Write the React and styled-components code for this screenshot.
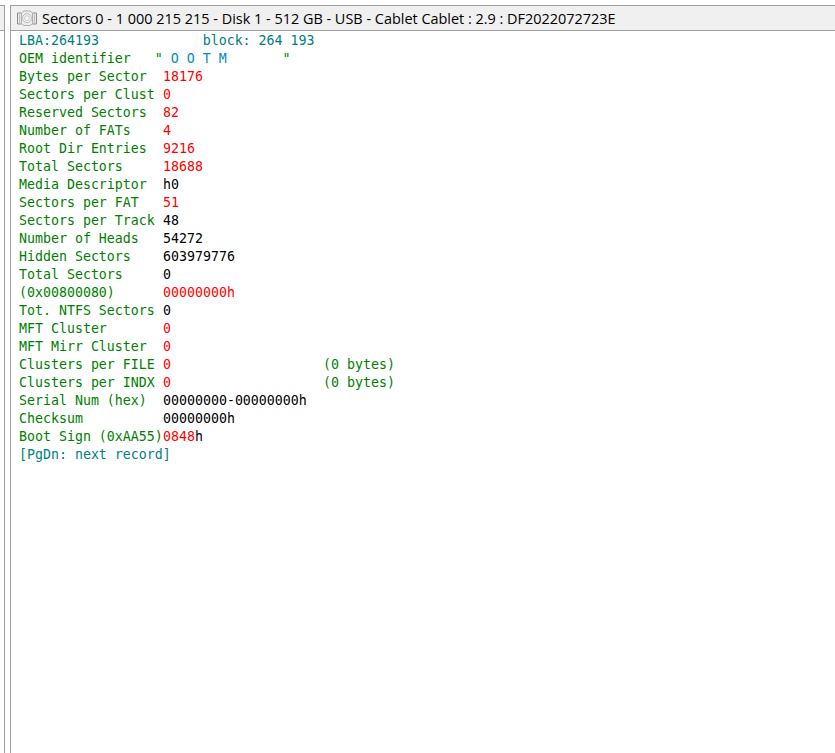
import React from "react";
import styled, { createGlobalStyle } from "styled-components";

const Global = createGlobalStyle`
  html, body { margin: 0; padding: 0; background: #fff; }
  body { width: 835px; height: 753px; overflow: hidden; }
`;

const Desk = styled.div`
  display: flex;
  height: 753px;
  padding-top: 5px;
  box-sizing: border-box;
`;

const SidePane = styled.div`
  flex: none;
  width: 5px;
  box-sizing: border-box;
  border-right: 1px solid #a0a0a0;
`;

const SideHeader = styled.div`
  height: 26px;
  box-sizing: border-box;
  background: #f0f0f0;
  border-top: 1px solid #a0a0a0;
  border-bottom: 1px solid #a0a0a0;
`;

const Window = styled.div`
  flex: 1;
  margin-left: 5px;
  border-left: 1px solid #a0a0a0;
  display: flex;
  flex-direction: column;
  min-width: 0;
`;

const TitleBar = styled.div`
  flex: none;
  height: 26px;
  box-sizing: border-box;
  display: flex;
  align-items: center;
  gap: 4px;
  padding-left: 5px;
  background: #f0f0f0;
  border-top: 1px solid #a0a0a0;
  border-bottom: 1px solid #a0a0a0;
`;

const TitleText = styled.span`
  font-family: "Open Sans", "Liberation Sans", sans-serif;
  font-size: 14.45px;
  color: #000;
  white-space: pre;
`;

const Dump = styled.div`
  padding: 1px 0 0 8px;
  font-family: "DejaVu Sans Mono", "Liberation Mono", monospace;
  font-size: 13.28px;
  line-height: 18px;
`;

const Row = styled.div`
  display: flex;
  height: 18px;
  white-space: pre;
`;

const Label = styled.span`
  flex: none;
  width: 144px;
  color: #008000;
`;

const Value = styled.span`
  flex: none;
  width: ${(p) => (p.$wide ? "160px" : "auto")};
  color: ${(p) => (p.$tone === "red" ? "#ff0000" : "#000")};
`;

const Note = styled.span`
  color: #008000;
`;

const Teal = styled.span`
  color: ${(p) => p.$color || "#008080"};
`;

const Green = styled.span`
  color: #008000;
`;

const Red = styled.span`
  color: #ff0000;
`;

function DiskIcon() {
  return (
    <svg width="22" height="16" viewBox="0 0 22 16" fill="none">
      <path d="M5.5 3H1.5V14H5.5M16.5 3H20.5V14H16.5" stroke="#8f8f8f" fill="#e6e6e6" />
      <path d="M3.5 4.5V12.5M18.5 4.5V12.5" stroke="#bdbdbd" />
      <path d="M5.5 3L8 1H14L16.5 3V14L14 15.5H8L5.5 14Z" stroke="#b0b0b0" fill="#ededed" />
      <circle cx="11" cy="8.2" r="4.5" stroke="#bcbcbc" fill="#f3f3f3" />
      <circle cx="11" cy="8.2" r="2.5" stroke="#cdcdcd" />
    </svg>
  );
}

const rows = [
  ["Bytes per Sector", "18176", "red"],
  ["Sectors per Clust", "0", "red"],
  ["Reserved Sectors", "82", "red"],
  ["Number of FATs", "4", "red"],
  ["Root Dir Entries", "9216", "red"],
  ["Total Sectors", "18688", "red"],
  ["Media Descriptor", "h0"],
  ["Sectors per FAT", "51", "red"],
  ["Sectors per Track", "48"],
  ["Number of Heads", "54272"],
  ["Hidden Sectors", "603979776"],
  ["Total Sectors", "0"],
  ["(0x00800080)", "00000000h", "red"],
  ["Tot. NTFS Sectors", "0"],
  ["MFT Cluster", "0", "red"],
  ["MFT Mirr Cluster", "0", "red"],
  ["Clusters per FILE", "0", "red", "(0 bytes)"],
  ["Clusters per INDX", "0", "red", "(0 bytes)"],
  ["Serial Num (hex)", "00000000-00000000h"],
  ["Checksum", "00000000h"],
];

export default function App() {
  return (
    <>
      <Global />
      <Desk>
        <SidePane>
          <SideHeader />
        </SidePane>
        <Window>
          <TitleBar>
            <DiskIcon />
            <TitleText>Sectors 0 - 1 000 215 215 - Disk 1 - 512 GB - USB - Cablet Cablet : 2.9 : DF2022072723E</TitleText>
          </TitleBar>
          <Dump>
            <Row>
              <Teal>{"LBA:264193             block: 264 193"}</Teal>
            </Row>
            <Row>
              <Green>{'OEM identifier   " '}</Green>
              <Teal $color="#0090b0">{"O O T M"}</Teal>
              <Green>{'       "'}</Green>
            </Row>
            {rows.map(([label, value, tone, note], i) => (
              <Row key={i}>
                <Label>{label}</Label>
                <Value $tone={tone} $wide={!!note}>{value}</Value>
                {note && <Note>{note}</Note>}
              </Row>
            ))}
            <Row>
              <Label>Boot Sign (0xAA55)</Label>
              <Value><Red>0848</Red>h</Value>
            </Row>
            <Row>
              <Teal>[PgDn: next record]</Teal>
            </Row>
          </Dump>
        </Window>
      </Desk>
    </>
  );
}
